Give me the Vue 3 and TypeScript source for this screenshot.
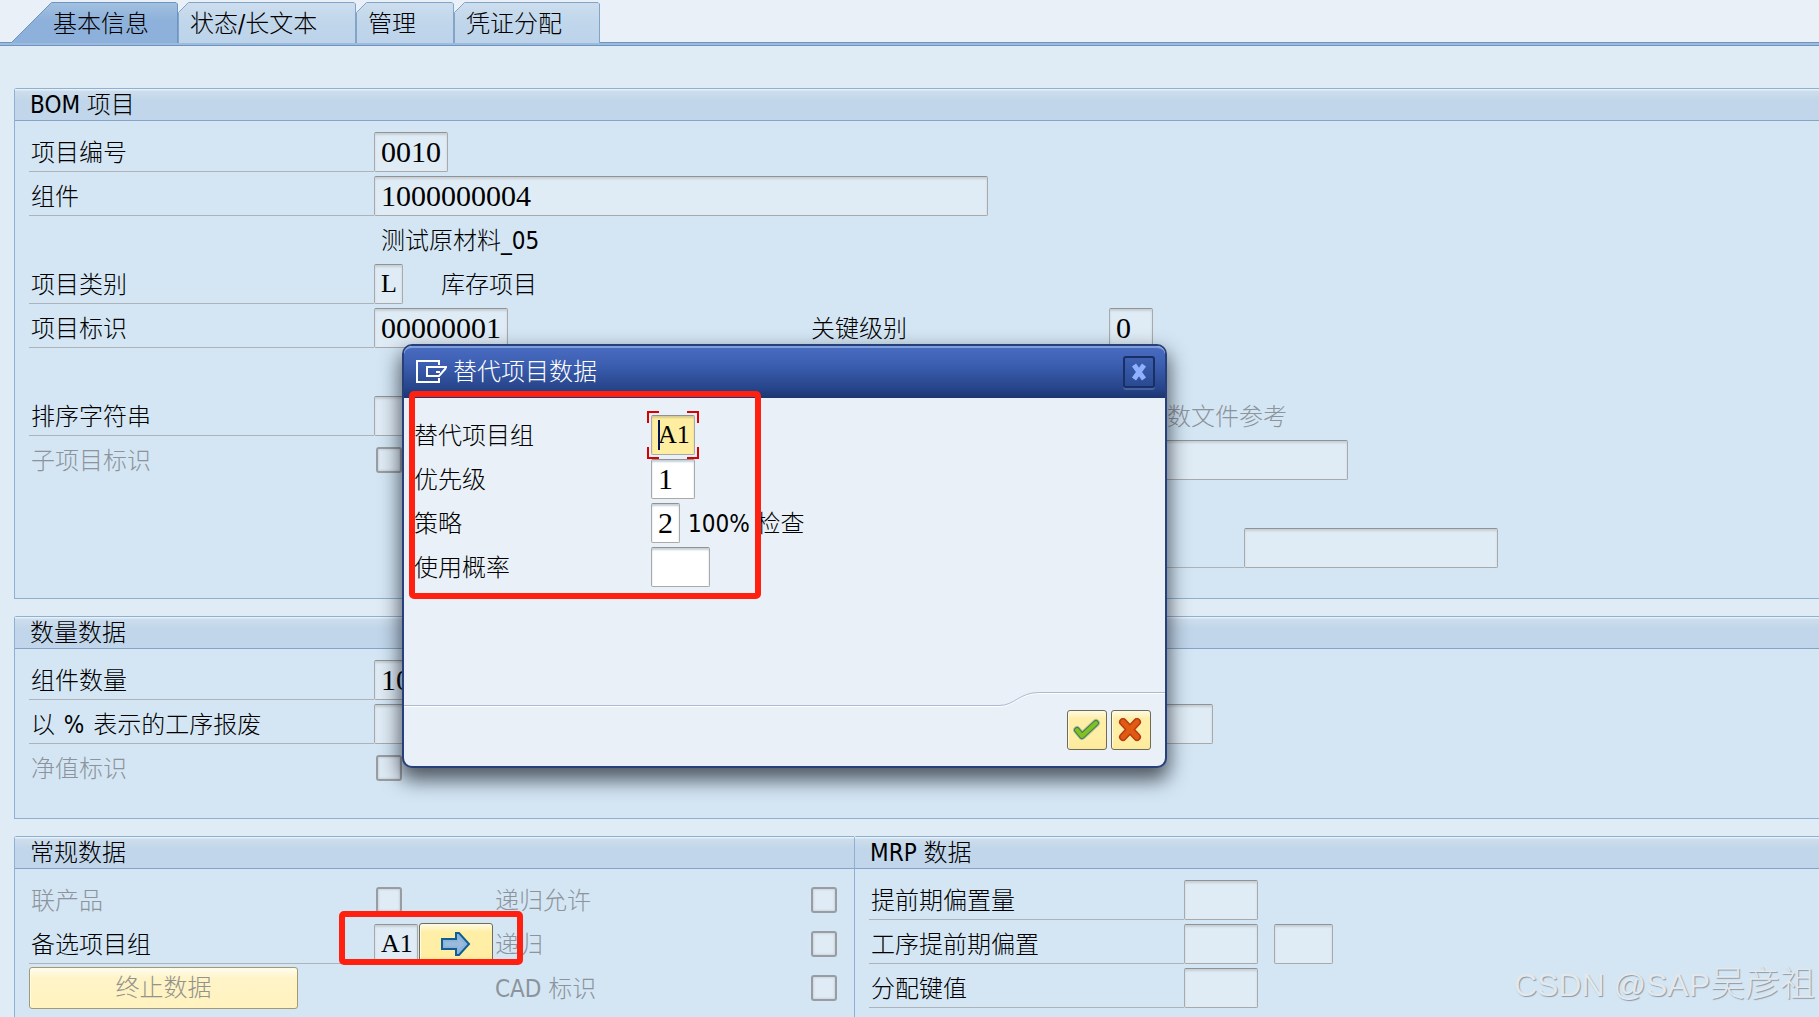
<script setup lang="ts">
interface Tab {
  label: string
  width: number
  slant: number
  drop: number
  active?: boolean
}

const tabs: Tab[] = [
  { label: '基本信息', width: 167, slant: 40, drop: 40, active: true },
  { label: '状态/长文本', width: 178, slant: 10, drop: 10 },
  { label: '管理', width: 98, slant: 10, drop: 10 },
  { label: '凭证分配', width: 146, slant: 10, drop: 10 },
]

function outline(tab: Tab): string {
  const right = tab.width - 1
  return `M0.5 41 V${tab.drop + 0.5} L${tab.slant + 0.5} 0.5 H${right - 1} L${right + 0.5} 2 V41`
}
</script>

<template>
  <div class="page">
    <nav class="tabs">
      <button
        v-for="tab in tabs"
        :key="tab.label"
        type="button"
        class="tab"
        :class="{ active: tab.active }"
        :style="{ width: tab.width + 'px' }"
      >
        <svg class="tab-shape" :width="tab.width" height="41" aria-hidden="true">
          <defs>
            <linearGradient id="tabOn" x1="0" y1="0" x2="0" y2="1">
              <stop offset="0" stop-color="#a3c1e0" />
              <stop offset="0.45" stop-color="#8db1da" />
              <stop offset="1" stop-color="#8db1da" />
            </linearGradient>
            <linearGradient id="tabOff" x1="0" y1="0" x2="0" y2="1">
              <stop offset="0" stop-color="#cddeee" />
              <stop offset="0.5" stop-color="#c0d6eb" />
              <stop offset="1" stop-color="#bdd3ea" />
            </linearGradient>
          </defs>
          <path
            :d="outline(tab)"
            :fill="tab.active ? 'url(#tabOn)' : 'url(#tabOff)'"
            :stroke="tab.active ? '#6e94c1' : '#84a4c6'"
          />
        </svg>
        <span class="tab-text">{{ tab.label }}</span>
      </button>
    </nav>

    <main class="content">
      <section class="panel">
        <h2>BOM 项目</h2>
        <div class="rows">
          <div class="row">
            <label class="lined" for="itemNo">项目编号</label>
            <input id="itemNo" class="w74" value="0010" readonly />
          </div>
          <div class="row">
            <label class="lined" for="component">组件</label>
            <input id="component" class="w614" value="1000000004" readonly />
          </div>
          <div class="row">
            <span></span>
            <span class="value">测试原材料_05</span>
          </div>
          <div class="row">
            <label class="lined" for="category">项目类别</label>
            <div class="cell category">
              <input id="category" class="w29 letters" value="L" readonly />
              <span class="text">库存项目</span>
            </div>
          </div>
          <div class="row">
            <label class="lined" for="itemId">项目标识</label>
            <input id="itemId" class="w134" value="00000001" readonly />
            <label class="flush" for="level">关键级别</label>
            <input id="level" class="w44" value="0" readonly />
          </div>
          <div class="row"></div>
          <div class="row reference">
            <label class="lined" for="sort">排序字符串</label>
            <input id="sort" class="w134" readonly />
            <span></span>
            <span class="text dim">数文件参考</span>
          </div>
          <div class="row">
            <label class="dim" for="sub">子项目标识</label>
            <input id="sub" type="checkbox" disabled />
            <span></span>
            <input class="w239" aria-label="参考" readonly />
          </div>
          <div class="row"></div>
          <div class="row wide">
            <span></span>
            <span></span>
            <span class="lined"></span>
            <input class="w254" aria-label="值" readonly />
          </div>
        </div>
      </section>

      <section class="panel">
        <h2>数量数据</h2>
        <div class="rows">
          <div class="row">
            <label class="lined" for="qty">组件数量</label>
            <input id="qty" class="w134" value="10" readonly />
          </div>
          <div class="row">
            <label class="lined" for="scrap">以 <b>%</b> 表示的工序报废</label>
            <input id="scrap" class="w74" readonly />
            <span></span>
            <input class="w104" aria-label="报废" readonly />
          </div>
          <div class="row">
            <label class="dim" for="net">净值标识</label>
            <input id="net" type="checkbox" disabled />
          </div>
        </div>
      </section>

      <div class="pair">
        <section class="panel">
          <h2>常规数据</h2>
          <div class="rows general">
            <div class="row">
              <label class="dim" for="co">联产品</label>
              <input id="co" type="checkbox" disabled />
              <label class="dim flush" for="recAllowed">递归允许</label>
              <input id="recAllowed" class="flush" type="checkbox" disabled />
            </div>
            <div class="row">
              <label class="lined" for="altGroup">备选项目组</label>
              <div class="cell alt">
                <input id="altGroup" class="w44 letters" value="A1" readonly />
                <button type="button" class="gold arrow" aria-label="替代项目数据">
                  <svg width="30" height="26" viewBox="0 0 30 26" aria-hidden="true">
                    <path d="M1 8H15V2H18L28 13L18 24H15V18H1Z" fill="#8db4da" stroke="#0d5f96" stroke-width="2" />
                    <path d="M4 11H17V7L23 13L17 19V15H4Z" fill="#9db9dc" />
                  </svg>
                </button>
              </div>
              <label class="dim flush" for="rec">递归</label>
              <input id="rec" class="flush" type="checkbox" disabled />
            </div>
            <div class="row">
              <button type="button" class="gold stop" disabled>终止数据</button>
              <span></span>
              <label class="dim flush" for="cad">CAD 标识</label>
              <input id="cad" class="flush" type="checkbox" disabled />
            </div>
          </div>
        </section>

        <section class="panel">
          <h2>MRP 数据</h2>
          <div class="rows mrp">
            <div class="row">
              <label class="lined" for="lead">提前期偏置量</label>
              <input id="lead" class="w74" readonly />
            </div>
            <div class="row">
              <label class="lined" for="opLead">工序提前期偏置</label>
              <div class="cell units">
                <input id="opLead" class="w74" readonly />
                <input class="w59" aria-label="单位" readonly />
              </div>
            </div>
            <div class="row">
              <label class="lined" for="dist">分配键值</label>
              <input id="dist" class="w74" readonly />
            </div>
          </div>
        </section>
      </div>
    </main>

    <div class="mark small"></div>

    <section class="dialog" role="dialog" aria-labelledby="dialogTitle">
      <header class="bar">
        <svg width="32" height="24" viewBox="0 0 32 24" fill="none" stroke="#fff" stroke-width="2" aria-hidden="true">
          <path d="M23 5V1H1V22H23V18" />
          <path d="M31 7H11V16H23L30 8M24 12H20" />
        </svg>
        <h3 id="dialogTitle">替代项目数据</h3>
        <button type="button" class="close" aria-label="关闭">
          <svg width="18" height="18" viewBox="0 0 18 18" aria-hidden="true">
            <path d="M4 2L14 16M14 2L4 16" stroke="#8fb0ff" stroke-width="5" />
          </svg>
        </button>
      </header>
      <div class="form">
        <div class="line">
          <label for="group">替代项目组</label>
          <div class="focus">
            <input id="group" class="w44 letters" value="A1" />
            <span class="caret"></span>
            <svg class="corners" width="52" height="48" viewBox="0 0 52 48" fill="none" stroke="#d80000" stroke-width="2" aria-hidden="true">
              <path d="M1 12V1H12M40 1H51V12M51 36V47H40M12 47H1V36" />
            </svg>
          </div>
        </div>
        <div class="line">
          <label for="priority">优先级</label>
          <input id="priority" class="w44" value="1" />
        </div>
        <div class="line">
          <label for="strategy">策略</label>
          <input id="strategy" class="w29" value="2" />
          <span class="text note">100% 检查</span>
        </div>
        <div class="line">
          <label for="usage">使用概率</label>
          <input id="usage" class="w59" />
        </div>
      </div>
      <footer class="foot">
        <span class="rule"></span>
        <svg class="bend" width="40" height="18" viewBox="0 0 40 18" fill="none" aria-hidden="true">
          <path d="M0 15.5C16 15.5 20 2.5 40 2.5" stroke="#fff" />
          <path d="M0 14.5C16 14.5 20 1.5 40 1.5" stroke="#adbbd0" />
        </svg>
        <span class="rule high"></span>
        <div class="actions">
          <button type="button" class="gold" aria-label="确定">
            <svg width="28" height="24" viewBox="0 0 28 24" fill="none" stroke-linecap="round" stroke-linejoin="round" aria-hidden="true">
              <path d="M4 12L9 18L23 5" stroke="#bcc4a8" stroke-width="8" />
              <path d="M4 12L9 18L23 5" stroke="#3f7d4b" stroke-width="6" />
              <path d="M4 12L9 18L23 5" stroke="#83c022" stroke-width="4" />
            </svg>
          </button>
          <button type="button" class="gold" aria-label="取消">
            <svg width="26" height="24" viewBox="0 0 26 24" fill="none" stroke-linecap="round" aria-hidden="true">
              <path d="M5 4L19 19M19 4L5 19" stroke="#b83a18" stroke-width="8" />
              <path d="M5 4L19 19M19 4L5 19" stroke="#e05b10" stroke-width="5" />
            </svg>
          </button>
        </div>
      </footer>
    </section>

    <div class="mark large"></div>
    <p class="watermark">CSDN @SAP<span>吴彦祖</span></p>
  </div>
</template>

<style>
body {
  margin: 0;
}
</style>

<style scoped>
* {
  box-sizing: border-box;
}

.page {
  position: relative;
  display: flex;
  flex-direction: column;
  min-height: 100vh;
  overflow: hidden;
  background: #dfebf5;
  color: #000;
  font-family: 'DejaVu Sans Condensed', 'Noto Sans CJK SC', sans-serif;
  font-size: 24px;
  font-weight: 300;
  line-height: 32px;
}

button {
  padding: 0;
  color: inherit;
  font: inherit;
}

.tabs {
  display: flex;
  height: 46px;
  padding: 2px 0 0 11px;
  background: linear-gradient(#6e94c1 1px, #9dbbdd 1px 3px, #6e94c1 3px) 0 100% / 100% 4px no-repeat, #e9f0f7;
}

.tab {
  position: relative;
  height: 41px;
  padding: 2px 0 0 12px;
  border: 0;
  background: none;
  text-align: left;
}

.tab.active {
  padding-left: 42px;
}

.tab-shape {
  position: absolute;
  top: 0;
  left: 0;
}

.tab-text {
  position: relative;
}

.content {
  display: flex;
  flex: 1;
  flex-direction: column;
  gap: 17px;
  padding: 42px 0 0 14px;
}

.panel {
  border: 1px solid #8db0d3;
  border-right: 0;
  border-top-left-radius: 3px;
  background: #d4e6f4;
}

h2 {
  height: 32px;
  margin: 0;
  padding-left: 15px;
  border-bottom: 1px solid #84a4c8;
  background: linear-gradient(#e6f0f8 1px, #cdddec 2px, #c1d6ea 12px);
  font-size: 24px;
  font-weight: 300;
  line-height: 32px;
}

.rows {
  display: flex;
  flex-direction: column;
  gap: 4px;
  padding: 11px 0 30px 14px;
}

.row {
  display: grid;
  grid-template: 40px / 345px 437px 298px 1fr;
  align-items: center;
}

.row:empty {
  height: 40px;
}

.row.reference {
  grid-template-columns: 345px 437px 356px 1fr;
}

.row.wide {
  grid-template-columns: 345px 437px 433px 1fr;
}

.general .row {
  grid-template-columns: 345px 121px 316px 1fr;
}

.mrp .row {
  grid-template-columns: 315px 1fr;
}

.row label,
.line label,
.text,
.value {
  padding-top: 2px;
}

.row label {
  padding-left: 2px;
}

.row .flush {
  padding-left: 0;
}

.lined {
  height: 40px;
  border-bottom: 1px solid #adb3b8;
  line-height: 38px;
}

.lined b {
  margin: 0 2px;
  font-weight: 300;
}

.value {
  padding-left: 7px;
}

.dim {
  color: #8c939b;
}

.cell {
  display: flex;
  align-items: center;
}

.category {
  gap: 38px;
}

.alt {
  gap: 1px;
}

.units {
  gap: 16px;
}

input {
  height: 40px;
  margin: 0;
  padding: 0 0 0 6px;
  border: 1px solid #a9a9a9;
  border-top-color: #929292;
  border-radius: 2px;
  outline: 0;
  background: #dfebf5;
  box-shadow: inset 0 2px 2px #c6d0d8;
  color: #000;
  font: 30px 'Liberation Serif', 'Noto Sans CJK SC', serif;
}

input.letters {
  font-size: 26px;
}

.w29 { width: 29px; }
.w44 { width: 44px; }
.w59 { width: 59px; }
.w74 { width: 74px; }
.w104 { width: 104px; }
.w134 { width: 134px; }
.w239 { width: 239px; }
.w254 { width: 254px; }
.w614 { width: 614px; }

input[type='checkbox'] {
  width: 26px;
  height: 26px;
  margin-left: 2px;
  padding: 0;
  border: 2px solid #999da1;
  border-radius: 3px;
  appearance: none;
  box-shadow: inset 0 0 2px 1px #ccd5e0;
}

input[type='checkbox'].flush {
  margin-left: 0;
}

.pair {
  display: grid;
  flex: 1;
  grid-template-columns: 840px 1fr;
}

.pair .panel {
  border-bottom: 0;
}

.pair .rows {
  padding-bottom: 8px;
}

.gold {
  display: flex;
  align-items: center;
  justify-content: center;
  width: 40px;
  height: 40px;
  border: 1px solid #6f6b55;
  border-radius: 3px;
  background: linear-gradient(#fffbe6, #ffeea6 8px, #ffeea4 70%, #fce99b);
  box-shadow: inset 1px 1px #fffbe2;
}

.gold.arrow {
  width: 74px;
  height: 42px;
}

.gold.stop {
  width: 269px;
  height: 42px;
  border-color: #a29a72;
  background: linear-gradient(#fffdf0, #fff4c8 10px, #fff2bf);
  color: #93938c;
}

.mark {
  position: absolute;
  border: 6px solid #ff2010;
  border-radius: 5px;
  pointer-events: none;
}

.mark.small {
  top: 911px;
  left: 339px;
  width: 184px;
  height: 54px;
}

.mark.large {
  top: 391px;
  left: 409px;
  width: 352px;
  height: 208px;
}

.dialog {
  position: absolute;
  top: 344px;
  left: 402px;
  display: flex;
  flex-direction: column;
  width: 765px;
  border: 2px solid #27407c;
  border-radius: 10px;
  background: #e9f0f7;
  box-shadow: 0 10px 20px 2px rgba(20, 25, 35, 0.7);
}

.bar {
  display: flex;
  align-items: center;
  height: 52px;
  padding: 0 10px 2px 12px;
  border-top: 2px solid #7f9fdb;
  border-radius: 8px 8px 0 0;
  background: linear-gradient(#486bc0, #3d60b3 30%, #27458b 80%, #1d3570);
}

h3 {
  flex: 1;
  margin: 0;
  padding-left: 5px;
  color: #fff;
  font-size: 24px;
  font-weight: 300;
}

.close {
  display: flex;
  align-items: center;
  justify-content: center;
  width: 32px;
  height: 32px;
  border: 2px solid #182f68;
  border-radius: 3px;
  background: linear-gradient(#3d60b0, #2a4a92);
  box-shadow: 0 2px #45649f;
}

.form {
  display: flex;
  flex-direction: column;
  gap: 4px;
  height: 294px;
  padding: 17px 0 0 10px;
}

.line {
  display: flex;
  align-items: center;
  height: 40px;
}

.line label {
  width: 237px;
}

.line input {
  background: #fff;
}

.note {
  padding-left: 8px;
}

.focus {
  position: relative;
  display: flex;
}

.focus input {
  background: #ffeea0;
  box-shadow: inset 0 2px 2px #d8cb90;
}

.caret {
  position: absolute;
  top: 5px;
  left: 7px;
  width: 2px;
  height: 30px;
  background: #00145a;
}

.corners {
  position: absolute;
  top: -4px;
  left: -4px;
}

.foot {
  position: relative;
  display: grid;
  grid-template-columns: 1fr 40px 126px;
  height: 74px;
}

.rule {
  height: 2px;
  margin-top: 13px;
  border-top: 1px solid #adbbd0;
  border-bottom: 1px solid #fff;
}

.rule.high {
  margin-top: 0;
}

.bend {
  margin-top: -1px;
}

.actions {
  position: absolute;
  top: 18px;
  right: 14px;
  display: flex;
  gap: 4px;
}

.watermark {
  position: absolute;
  right: 4px;
  bottom: 10px;
  margin: 0;
  color: #e3e8ed;
  font-family: 'Liberation Sans', 'Noto Sans CJK SC', sans-serif;
  font-size: 32px;
  line-height: 44px;
  text-shadow: 1px 1px 1px #8b97a5;
  white-space: nowrap;
}

.watermark span {
  font-size: 35px;
}
</style>
